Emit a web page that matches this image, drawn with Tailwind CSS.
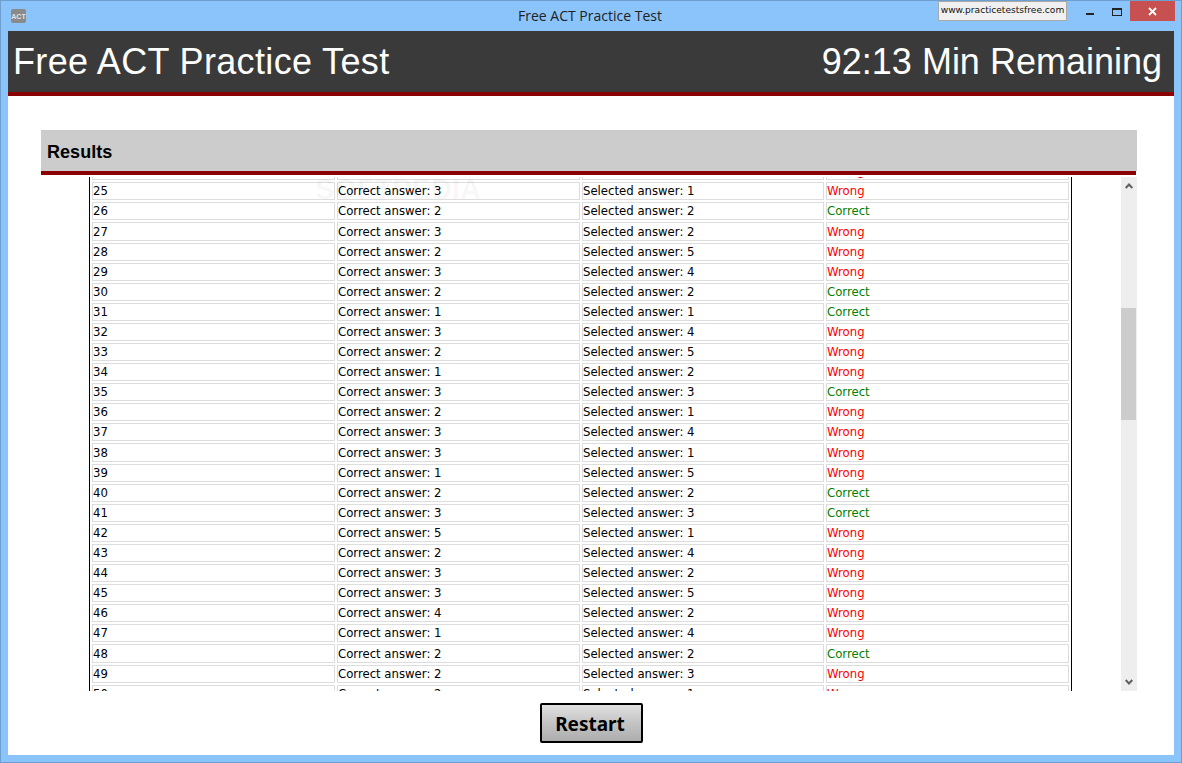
<!DOCTYPE html>
<html lang="en">
<head>
<meta charset="UTF-8">
<title>Free ACT Practice Test</title>
<script src="https://cdn.jsdelivr.net/npm/@tailwindcss/browser@4"></script>
</head>
<body class="overflow-hidden bg-white">
<div class="flex h-[763px] w-[1182px] flex-col border border-[#6d9fd0] bg-[#8ac4fa] px-[7px] pb-[7px] font-['Liberation_Sans',sans-serif]">
  <!-- title bar -->
  <div class="relative h-[30px] shrink-0">
    <div class="absolute left-[3px] top-[8px] flex h-[14px] w-[15px] items-center justify-center rounded-[2px] bg-[#8a8a8a] text-[7px] font-bold leading-none text-[#e4e4e4]">ACT</div>
    <div class="absolute left-0 right-0 top-[6px] pr-[2px] text-center font-['Open_Sans',sans-serif] text-[14px] leading-[18px] text-[#222]">Free ACT Practice Test</div>
    <div class="absolute left-[930px] top-0 flex h-[20px] w-[129px] items-center justify-center border border-[#aaa] bg-[#f0f0f0] font-['DejaVu_Sans',sans-serif] text-[9.1px] text-[#111]">www.practicetestsfree.com</div>
    <div class="absolute left-[1078px] top-[12px] h-[2px] w-[8px] bg-[#222]"></div>
    <div class="absolute left-[1104px] top-[7px] h-[8px] w-[10px] border border-t-2 border-[#222]"></div>
    <div class="absolute left-[1122px] top-0 flex h-[20px] w-[45px] items-center justify-center bg-[#c75050]">
      <svg width="9" height="9" viewBox="0 0 9 9"><path d="M1 1l7 7M8 1L1 8" stroke="#fff" stroke-width="1.8"/></svg>
    </div>
  </div>

  <!-- client area -->
  <div class="flex min-h-0 flex-1 flex-col bg-white">
    <div class="flex h-[65px] shrink-0 items-center justify-between border-b-4 border-[#8b0000] bg-[#3a3a3a] pl-[5px] pr-[12px] text-[36px] leading-none text-white">
      <span class="tracking-[0.35px]">Free ACT Practice Test</span>
      <span>92:13 Min Remaining</span>
    </div>

    <div class="ml-[33px] mr-[37px] mt-[34px] flex min-h-0 flex-col">
      <div class="flex h-[41px] items-center bg-[#cccccc] pl-[6px] pt-[3px] text-[18px] font-bold tracking-[0.05px] text-black">Results</div>
      <div class="mr-px h-[4px] bg-[#8b0000]"></div>

      <div class="relative mt-[2px] flex h-[514px] overflow-hidden">
        <div class="ml-[48px] w-[983px] overflow-hidden border-x border-black">
          <table class="-mt-[17px] table-fixed border-separate [border-spacing:2px] font-['DejaVu_Sans',sans-serif] text-[11.7px] leading-none text-black">
            <colgroup>
              <col class="w-[243px]"><col class="w-[243px]"><col class="w-[242px]"><col class="w-[243px]">
            </colgroup>
            <tbody id="rows"></tbody>
          </table>
        </div>
        <div class="pointer-events-none absolute left-[274px] top-[-2px] flex items-start font-['Liberation_Sans',sans-serif] text-[29px] font-bold leading-none text-black/[0.035]">SOFTPEDIA<span class="text-[9px]">®</span></div>
        <div class="ml-auto flex h-full w-[16px] flex-col justify-between bg-[#eeeeee] py-[6px]">
          <svg class="ml-[4px]" width="8" height="6" viewBox="0 0 8 6"><path d="M.7 5L4 1.5 7.3 5" fill="none" stroke="#606060" stroke-width="2"/></svg>
          <svg class="ml-[4px]" width="8" height="6" viewBox="0 0 8 6"><path d="M.7 1L4 4.5 7.3 1" fill="none" stroke="#606060" stroke-width="2"/></svg>
        </div>
        <div class="absolute right-px top-[131px] h-[112px] w-[15px] bg-[#cccccc]"></div>
      </div>
    </div>

    <div class="mt-[12px] flex justify-center">
      <button class="h-[40px] w-[103px] rounded-[2px] border-2 border-black bg-gradient-to-b from-[#e0e0e0] via-[#c4c4c4] to-[#adadad] pr-[2px] pt-[3px] font-['Noto_Sans',sans-serif] text-[19px] font-bold leading-none text-black">Restart</button>
    </div>
  </div>
</div>

<script>
// row: [number, correct answer, selected answer]
const answers = [
  [24, 1, 3], [25, 3, 1], [26, 2, 2], [27, 3, 2], [28, 2, 5], [29, 3, 4], [30, 2, 2], [31, 1, 1], [32, 3, 4],
  [33, 2, 5], [34, 1, 2], [35, 3, 3], [36, 2, 1], [37, 3, 4], [38, 3, 1], [39, 1, 5], [40, 2, 2], [41, 3, 3],
  [42, 5, 1], [43, 2, 4], [44, 3, 2], [45, 3, 5], [46, 4, 2], [47, 1, 4], [48, 2, 2], [49, 2, 3], [50, 2, 1]
];
// these rows sit one pixel taller in the screenshot
const tallRows = [27, 38, 48];
const cell = 'h-[18px] overflow-hidden border border-[#dddddd] pt-[2px] align-middle whitespace-nowrap';

document.getElementById('rows').innerHTML = answers.map(([num, correct, selected]) => {
  const ok = correct === selected;
  const height = tallRows.includes(num) ? 'style="height:19px"' : '';
  return `<tr>
    <td class="${cell}" ${height}>${num}</td>
    <td class="${cell}" ${height}>Correct answer: ${correct}</td>
    <td class="${cell}" ${height}>Selected answer: ${selected}</td>
    <td class="${cell} ${ok ? 'text-[#008000]' : 'text-[#ff0000]'}" ${height}>${ok ? 'Correct' : 'Wrong'}</td>
  </tr>`;
}).join('');
</script>
</body>
</html>
